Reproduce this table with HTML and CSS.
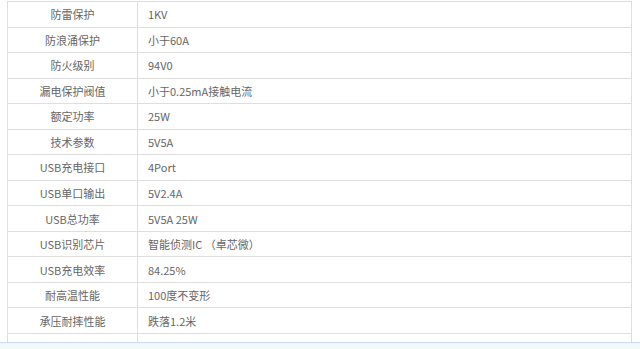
FILE: index.html
```html
<!DOCTYPE html>
<html lang="zh">
<head>
<meta charset="utf-8">
<link rel="stylesheet" href="styles.css">
</head>
<body>
<div class="page">
  <div class="spec-table">
    <div class="row"><div class="key">防雷保护</div><div class="val">1KV</div></div>
    <div class="row"><div class="key">防浪涌保护</div><div class="val">小于60A</div></div>
    <div class="row"><div class="key">防火级别</div><div class="val">94V0</div></div>
    <div class="row"><div class="key">漏电保护阀值</div><div class="val">小于0.25mA接触电流</div></div>
    <div class="row"><div class="key">额定功率</div><div class="val">25W</div></div>
    <div class="row"><div class="key">技术参数</div><div class="val">5V5A</div></div>
    <div class="row"><div class="key">USB充电接口</div><div class="val">4Port</div></div>
    <div class="row"><div class="key">USB单口输出</div><div class="val">5V2.4A</div></div>
    <div class="row"><div class="key">USB总功率</div><div class="val">5V5A 25W</div></div>
    <div class="row"><div class="key">USB识别芯片</div><div class="val">智能侦测IC （卓芯微）</div></div>
    <div class="row"><div class="key">USB充电效率</div><div class="val">84.25%</div></div>
    <div class="row"><div class="key">耐高温性能</div><div class="val">100度不变形</div></div>
    <div class="row"><div class="key">承压耐摔性能</div><div class="val">跌落1.2米</div></div>
    <div class="row row-partial"><div class="key"></div><div class="val"></div></div>
  </div>
  <div class="footer-bar"></div>
</div>
</body>
</html>
```

FILE: styles.css
```css
html, body {
  margin: 0;
  padding: 0;
  background: #ffffff;
}

.page {
  width: 640px;
  height: 349px;
  overflow: hidden;
  padding-top: 1px;
  box-sizing: border-box;
  font-family: "Noto Sans CJK SC", "Noto Sans", sans-serif;
  font-size: 11px;
  color: #666666;
}

.spec-table {
  margin-left: 7px;
  width: 625px;
  border-top: 1px solid #dedede;
  border-left: 1px solid #dedede;
  border-right: 1px solid #dedede;
  box-sizing: border-box;
}

.row {
  display: grid;
  grid-template-columns: 130px 1fr;
  height: 25.54px;
  border-bottom: 1px solid #dedede;
  box-sizing: border-box;
}

.key {
  border-right: 1px solid #dedede;
  display: flex;
  align-items: center;
  justify-content: center;
  white-space: nowrap;
}

.val {
  display: flex;
  align-items: center;
  padding-left: 10px;
  white-space: nowrap;
}

.row-partial {
  height: 8px;
  border-bottom: none;
}

.footer-bar {
  height: 10px;
  border-top: 1px solid #c9ddf6;
  background: #f3f8fe;
}
```
